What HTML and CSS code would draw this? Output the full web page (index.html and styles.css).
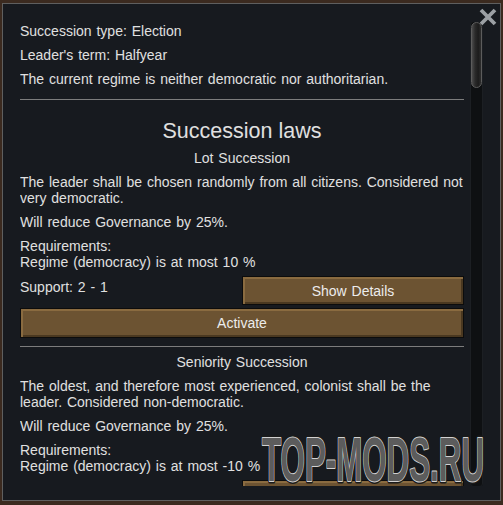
FILE: index.html
```html
<!DOCTYPE html>
<html>
<head>
<meta charset="utf-8">
<link rel="stylesheet" href="styles.css">
</head>
<body>
<div class="panel">
  <div class="scroll">
    <div class="content">
      <p>Succession type: Election</p>
      <p>Leader's term: Halfyear</p>
      <p>The current regime is neither democratic nor authoritarian.</p>
      <div class="rule"></div>
      <h2 class="title">Succession laws</h2>
      <h3 class="law">Lot Succession</h3>
      <p>The leader shall be chosen randomly from all citizens. Considered not very democratic.</p>
      <p>Will reduce Governance by 25%.</p>
      <p>Requirements:<br>Regime (democracy) is at most 10 %</p>
      <div class="support-row">
        <span class="support">Support: 2 - 1</span>
        <div class="btn btn-half">Show Details</div>
      </div>
      <div class="btn btn-full">Activate</div>
      <div class="rule rule-tight"></div>
      <h3 class="law">Seniority Succession</h3>
      <p>The oldest, and therefore most experienced, colonist shall be the leader. Considered non-democratic.</p>
      <p>Will reduce Governance by 25%.</p>
      <p>Requirements:<br>Regime (democracy) is at most -10 %</p>
      <div class="support-row">
        <span class="support">Support: 1 - 2</span>
        <div class="btn btn-half">Show Details</div>
      </div>
    </div>
  </div>
  <div class="track"><div class="thumb"></div></div>
  <svg class="close" width="18" height="18" viewBox="0 0 18 18">
    <path d="M2 2 L16 16 M16 2 L2 16" stroke="#9ca0a4" stroke-width="3.8" fill="none"/>
  </svg>
</div>
<svg class="watermark" width="232" height="56" viewBox="0 0 232 56">
  <text x="4" y="48" textLength="222" lengthAdjust="spacingAndGlyphs" class="wm-outer">TOP-MODS.RU</text>
  <text x="4" y="48" textLength="222" lengthAdjust="spacingAndGlyphs" class="wm-text">TOP-MODS.RU</text>
</svg>
</body>
</html>
```
FILE: styles.css
```css
html, body {
  margin: 0;
  padding: 0;
}
body {
  position: relative;
  width: 503px;
  height: 505px;
  overflow: hidden;
  background: #3b2a1f;
  font-family: "Liberation Sans", Arial, sans-serif;
  font-size: 14px;
  color: #e0e0e0;
}
.panel {
  position: relative;
  box-sizing: border-box;
  margin: 3px 2px 0 2px;
  height: 498px;
  border: 1px solid #5f5f5f;
  background: #171a1f;
  display: flex;
  gap: 6px;
  padding: 18px 17px 14px 17px;
}
.scroll {
  flex: 1;
  overflow: hidden;
}
.content {
  padding-top: 1px;
  word-spacing: 1px;
}
p {
  margin: 0 0 8px 0;
  line-height: 16px;
}
.rule {
  height: 1px;
  background: #7c7c7c;
  margin: 12px 0 19px 0;
}
.rule-tight {
  margin: 8px 0 7px 0;
}
.title {
  margin: 0 0 7px 0;
  font-weight: normal;
  font-size: 21.5px;
  line-height: 24px;
  text-align: center;
  word-spacing: 0;
}
.law {
  margin: 0 0 8px 0;
  font-weight: normal;
  font-size: 14px;
  line-height: 16px;
  text-align: center;
}
.support-row {
  display: grid;
  grid-template-columns: 1fr 1fr;
  align-items: start;
  margin-top: -2px;
}
.support {
  padding-top: 3px;
  line-height: 16px;
}
.btn {
  box-sizing: border-box;
  display: flex;
  align-items: center;
  justify-content: center;
  color: #ececec;
  font-size: 14px;
  background: #6c5332;
  border: 1px solid #0c0c0c;
  box-shadow: inset 2px 2px 0 #8a6b40, inset -2px -2px 0 #4a3820;
}
.btn-half {
  height: 29px;
}
.btn-full {
  height: 30px;
  margin-top: 3px;
}
.track {
  width: 13px;
  flex: none;
  background: #0e1012;
  box-shadow: inset 1px 0 0 #1c1f23, inset -1px 0 0 #1c1f23;
  border-radius: 3px;
}
.thumb {
  box-sizing: border-box;
  height: 66px;
  margin: 0 1px;
  border-radius: 6px;
  border: 1px solid #5c5c5c;
  background: linear-gradient(to right, #4a4a4a 0%, #2a2a2a 35%, #1c1c1c 70%, #2e2e2e 100%);
}
.close {
  position: absolute;
  top: 4px;
  right: 3px;
}
.watermark {
  position: absolute;
  left: 258px;
  top: 433px;
}
.watermark text {
  font-family: "Liberation Sans", Arial, sans-serif;
  font-weight: bold;
  font-size: 63px;
}
.wm-outer {
  fill: none;
  stroke: #1a1a1a;
  stroke-width: 5px;
  stroke-linejoin: round;
}
.wm-text {
  fill: #5c5c5c;
  stroke: #d2d2d2;
  stroke-width: 2px;
  stroke-linejoin: round;
  paint-order: stroke fill;
}
```
